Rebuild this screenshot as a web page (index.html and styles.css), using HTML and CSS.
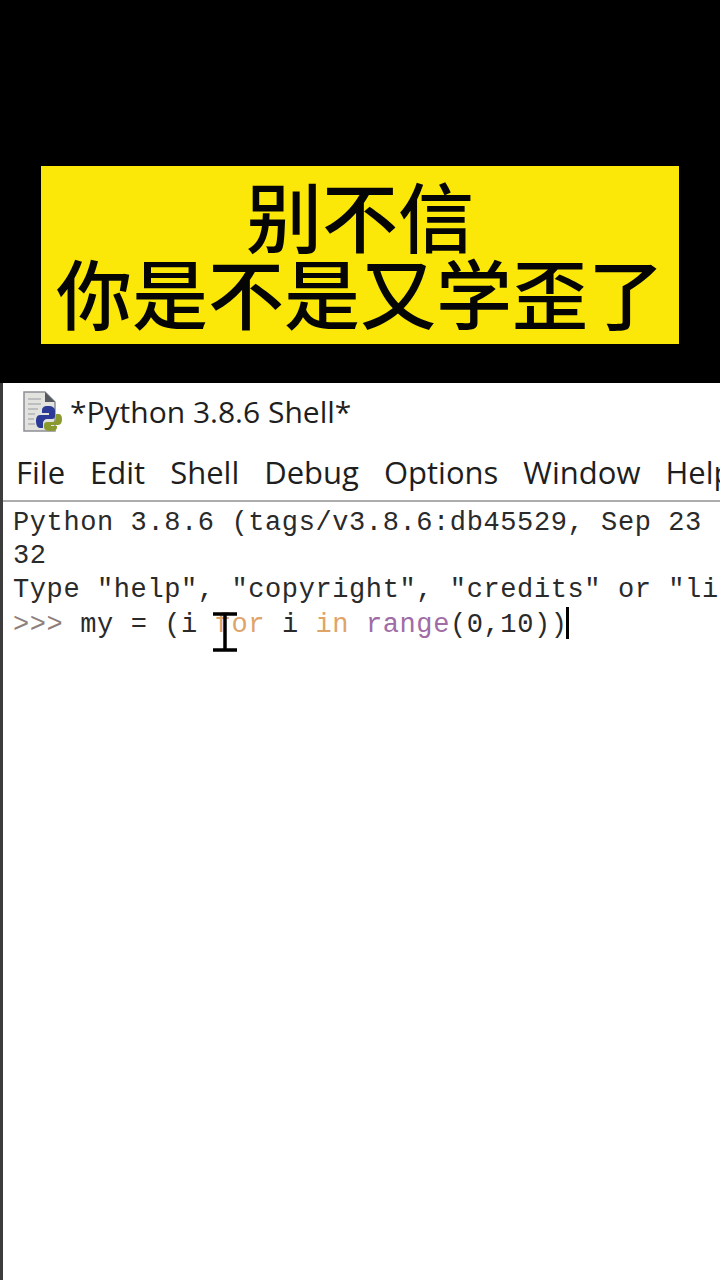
FILE: index.html
```html
<!DOCTYPE html>
<html lang="zh-CN">
<head>
<meta charset="utf-8">
<title>Python Shell</title>
<link rel="stylesheet" href="styles.css">
</head>
<body>
<header class="top">
  <h1 class="banner">别不信<br>你是不是又学歪了</h1>
</header>
<main class="window">
  <div class="titlebar">
    <svg class="app-icon" viewBox="0 0 40 42" aria-hidden="true">
      <path d="M1 1H22L32 11V40H1Z" fill="#e2e2df" stroke="#8d8f94" stroke-width="1.5"/>
      <path d="M22 1V11H32Z" fill="#55585f"/>
      <path d="M5 8H18M5 13H18M5 18H15M5 23H12M5 28H11M5 33H12" stroke="#b0b2b6" stroke-width="1.5"/>
      <path d="M25 15C20 15 19 17 19 20V22H26V24H17C14 24 13 27 13 30C13 33 14 37 17 37H20V32C20 30 22 28 24 28H29C31 28 32 27 32 25V20C32 17 30 15 25 15Z" fill="#2a3a96"/>
      <path d="M33 23V27C33 30 31 31 29 31H24C22 31 21 32 21 34V36C21 39 24 40 28 40C32 40 34 39 34 36V35H28V34H35C38 34 39 31 39 28C39 25 38 23 35 23Z" fill="#8b9a2c"/>
    </svg>
    <span class="title">*Python 3.8.6 Shell*</span>
  </div>
  <nav class="menu">
    <span>File</span><span>Edit</span><span>Shell</span><span>Debug</span><span>Options</span><span>Window</span><span>Help</span>
  </nav>
  <section class="shell">
    <div class="line">Python 3.8.6 (tags/v3.8.6:db45529, Sep 23 2020, 15:52:53) [MSC v.1927 64 bit (AMD64)] on win</div>
    <div class="line">32</div>
    <div class="line">Type "help", "copyright", "credits" or "license()" for more information.</div>
    <div class="line"><span class="prompt">&gt;&gt;&gt;</span> my = (i <span class="kw">for</span> i <span class="kw">in</span> <span class="bi">range</span>(0,10))<span class="caret"></span></div>
    <svg class="ibeam" viewBox="0 0 26 40" aria-hidden="true">
      <path d="M1 2H25M13 2V38M1 38H25" fill="none" stroke="#000" stroke-width="3.5"/>
    </svg>
  </section>
</main>
</body>
</html>
```
FILE: styles.css
```css
* { box-sizing: border-box; }
html, body { margin: 0; padding: 0; width: 720px; height: 1280px; overflow: hidden; background: #000; }
body { display: flex; flex-direction: column; }
.top { height: 383px; padding: 166px 41px 39px; flex: none; }
.banner {
  margin: 0; height: 178px; background: #fbe809; color: #050505;
  font-family: "Noto Sans CJK SC", sans-serif; font-weight: 500; font-size: 76px; line-height: 77px;
  text-align: center; padding-top: 10px; white-space: nowrap;
}
.window {
  flex: 1; border-left: 3px solid #3c3c3c; background: #fff; display: flex; flex-direction: column; overflow: hidden;
  font-family: "Open Sans", sans-serif; color: #1e1e1e;
}
.titlebar { height: 57px; display: flex; align-items: center; padding: 0 0 0 20px; flex: none; }
.app-icon { width: 40px; height: 42px; margin-right: 7px; }
.title { font-size: 30px; white-space: nowrap; }
.menu {
  height: 62px; flex: none; display: flex; gap: 25px; padding: 4px 0 0 13px; align-items: center;
  font-size: 31px; white-space: nowrap; border-bottom: 2px solid #adadad;
}
.shell {
  position: relative; flex: 1; padding: 5px 0 0 10px;
  font-family: "Liberation Mono", monospace; font-size: 27px; letter-spacing: 0.6px; line-height: 33.4px; color: #2a2a2a;
}
.line { white-space: pre; }
.prompt { color: #8f7f7c; }
.kw { color: #dfa468; }
.bi { color: #a06ca6; }
.caret { display: inline-block; width: 3px; height: 32px; background: #000; vertical-align: -7px; margin-left: -2px; }
.ibeam { position: absolute; left: 209px; top: 110px; width: 26px; height: 40px; }
```
